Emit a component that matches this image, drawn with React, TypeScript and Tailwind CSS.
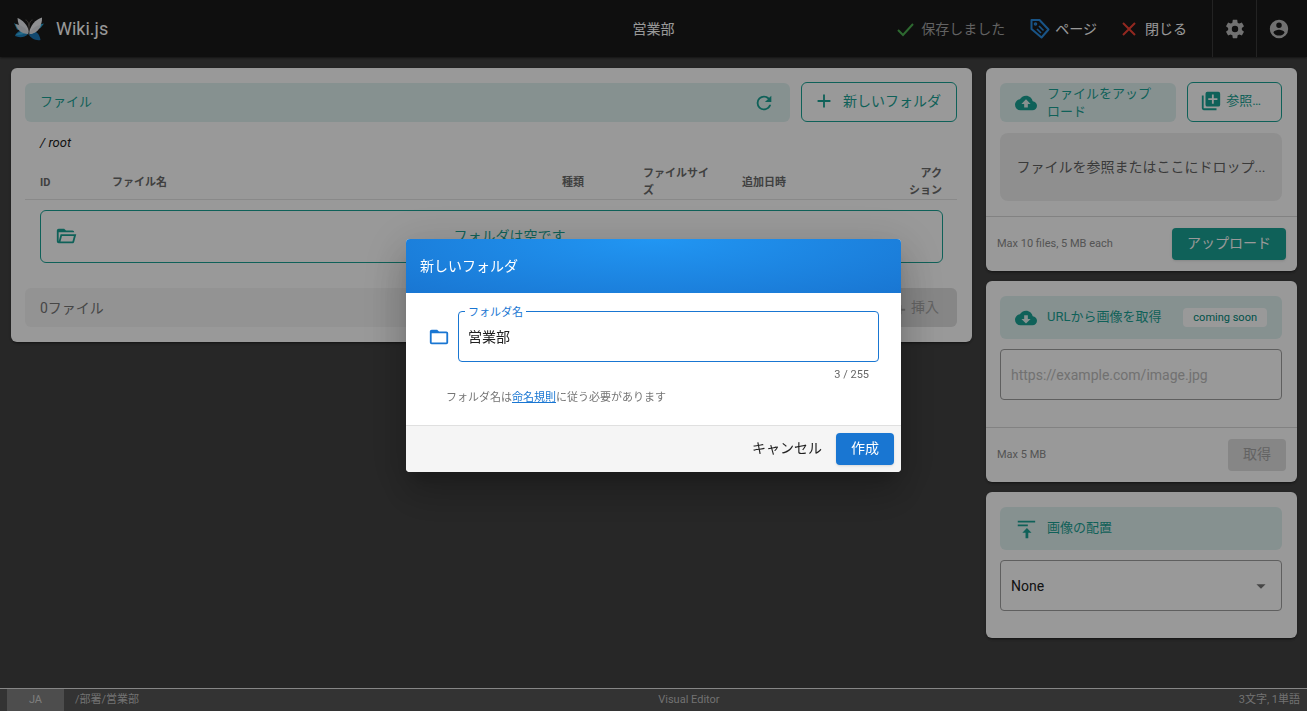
import React, { useState } from "react";

const paths = {
  refresh:
    "M17.65,6.35C16.2,4.9 14.21,4 12,4A8,8 0 0,0 4,12A8,8 0 0,0 12,20C15.73,20 18.84,17.45 19.73,14H17.65C16.83,16.33 14.61,18 12,18A6,6 0 0,1 6,12A6,6 0 0,1 12,6C13.66,6 15.14,6.69 16.22,7.78L13,11H20V4L17.65,6.35Z",
  plus: "M19,13H13V19H11V13H5V11H11V5H13V11H19V13Z",
  cloudUpload:
    "M14,13V17H10V13H7L12,8L17,13M19.35,10.03C18.67,6.59 15.64,4 12,4C9.11,4 6.6,5.64 5.35,8.03C2.34,8.36 0,10.9 0,14A6,6 0 0,0 6,20H19A5,5 0 0,0 24,15C24,12.36 21.95,10.22 19.35,10.03Z",
  cloudDownload:
    "M17,13L12,18L7,13H10V9H14V13M19.35,10.03C18.67,6.59 15.64,4 12,4C9.11,4 6.6,5.64 5.35,8.03C2.34,8.36 0,10.9 0,14A6,6 0 0,0 6,20H19A5,5 0 0,0 24,15C24,12.36 21.95,10.22 19.35,10.03Z",
  plusBox:
    "M19,11H15V15H13V11H9V9H13V5H15V9H19M20,2H8A2,2 0 0,0 6,4V16A2,2 0 0,0 8,18H20A2,2 0 0,0 22,16V4A2,2 0 0,0 20,2M4,6H2V20A2,2 0 0,0 4,22H18V20H4V6Z",
  folderOpen:
    "M6.1,10L4,18V8H21A2,2 0 0,0 19,6H12L10,4H4A2,2 0 0,0 2,6V18A2,2 0 0,0 4,20H19C19.9,20 20.7,19.4 20.9,18.5L23.2,10H6.1M19,18H6L7.6,12H20.6L19,18Z",
  folder:
    "M20,18H4V8H20M20,6H12L10,4H4C2.89,4 2,4.89 2,6V18A2,2 0 0,0 4,20H20A2,2 0 0,0 22,18V8C22,6.89 21.1,6 20,6Z",
  cog: "M12,15.5A3.5,3.5 0 0,1 8.5,12A3.5,3.5 0 0,1 12,8.5A3.5,3.5 0 0,1 15.5,12A3.5,3.5 0 0,1 12,15.5M19.43,12.97C19.47,12.65 19.5,12.33 19.5,12C19.5,11.67 19.47,11.34 19.43,11L21.54,9.37C21.73,9.22 21.78,8.95 21.66,8.73L19.66,5.27C19.54,5.05 19.27,4.96 19.05,5.05L16.56,6.05C16.04,5.66 15.5,5.32 14.87,5.07L14.5,2.42C14.46,2.18 14.25,2 14,2H10C9.75,2 9.54,2.18 9.5,2.42L9.13,5.07C8.5,5.32 7.96,5.66 7.44,6.05L4.95,5.05C4.73,4.96 4.46,5.05 4.34,5.27L2.34,8.73C2.21,8.95 2.27,9.22 2.46,9.37L4.57,11C4.53,11.34 4.5,11.67 4.5,12C4.5,12.33 4.53,12.65 4.57,12.97L2.46,14.63C2.27,14.78 2.21,15.05 2.34,15.27L4.34,18.73C4.46,18.95 4.73,19.03 4.95,18.95L7.44,17.94C7.96,18.34 8.5,18.68 9.13,18.93L9.5,21.58C9.54,21.82 9.75,22 10,22H14C14.25,22 14.46,21.82 14.5,21.58L14.87,18.93C15.5,18.67 16.04,18.34 16.56,17.94L19.05,18.95C19.27,19.03 19.54,18.95 19.66,18.73L21.66,15.27C21.78,15.05 21.73,14.78 21.54,14.63L19.43,12.97Z",
  account:
    "M12,19.2C9.5,19.2 7.29,17.92 6,16C6.03,14 10,12.9 12,12.9C14,12.9 17.97,14 18,16C16.71,17.92 14.5,19.2 12,19.2M12,5A3,3 0 0,1 15,8A3,3 0 0,1 12,11A3,3 0 0,1 9,8A3,3 0 0,1 12,5M12,2A10,10 0 0,0 2,12A10,10 0 0,0 12,22A10,10 0 0,0 22,12C22,6.47 17.5,2 12,2Z",
  alignTop: "M3,3H22V5H3V3M3,7H14V9H3V7M13,11L18,16H14.5V22H11.5V16H8L13,11Z",
  playlistPlus: "M2,16H10V14H2M18,14V10H16V14H12V16H16V20H18V16H22V14M14,6H2V8H14M14,10H2V12H14V10Z",
  menuDown: "M7,10L12,15L17,10H7Z",
};

function Icon({ name, className = "size-[22px]" }: { name: keyof typeof paths; className?: string }) {
  return (
    <svg viewBox="0 0 24 24" fill="currentColor" aria-hidden="true" className={`shrink-0 ${className}`}>
      <path d={paths[name]} />
    </svg>
  );
}

function Logo() {
  return (
    <svg viewBox="0 0 60 48" className="h-6 w-[30px] shrink-0" aria-hidden="true">
      <path d="M26 30 L6 25 L0 12 L10 18 Z" fill="#2ba6d8" />
      <path d="M34 30 L53 22 L60 13 L50 15 Z" fill="#2ba6d8" />
      <path d="M28 28 C16 25 5 28 2 38 C10 42 22 41 28 34 Z" fill="#1f86c4" />
      <path d="M30 28 C42 25 51 32 53 46 C43 48 33 42 29 34 Z" fill="#1c78ba" />
      <path d="M3 36 C10 31 18 29 26 31 L16 35 Z" fill="#3bb4e6" />
      <path d="M28 33 C18 31 8 20 7 2 C17 6 27 15 30 29 Z" fill="#e6e9ee" />
      <path d="M30 33 C32 17 43 5 56 1 C57 16 47 30 34 34 Z" fill="#f1f2f5" />
      <path d="M28 34 C16 34 7 27 3 14 C14 16 24 22 29 31 Z" fill="#d6dbe1" />
      <path d="M31 34 C42 34 50 27 54 16 C44 17 36 23 31 31 Z" fill="#dfe2e7" />
      <path d="M30 36 V19 M30 19 C29 10 26 6 23 6 M30 19 C31 10 34 6 37 6" fill="none" stroke="#6b6560" strokeWidth="1.8" />
    </svg>
  );
}

function Card({ children, className = "" }: { children: React.ReactNode; className?: string }) {
  return (
    <section className={`rounded-md bg-white shadow-[0_3px_1px_-2px_rgba(0,0,0,.2),0_2px_2px_rgba(0,0,0,.14),0_1px_5px_rgba(0,0,0,.12)] ${className}`}>
      {children}
    </section>
  );
}

const outlineButton =
  "flex h-10 shrink-0 items-center rounded-md border border-[#1aa294] pb-0.5 text-[#1aa294]";

export default function App() {
  const [name, setName] = useState("営業部");
  const [url, setUrl] = useState("");
  return (
    <div
      lang="ja"
      className="flex min-h-screen flex-col bg-[#424242] font-[Roboto,'Noto_Sans_CJK_JP',sans-serif] text-sm text-[#212121]"
    >
      <header className="grid h-[57px] grid-cols-[1fr_auto_1fr] items-center bg-[#191919] text-white shadow-[0_1px_2px_rgba(0,0,0,.5)]">
        <div className="flex items-center gap-3 pl-3.5">
          <Logo />
          <span className="text-lg">Wiki.js</span>
        </div>
        <span className="text-sm">営業部</span>
        <div className="flex h-full items-center justify-end">
          <button disabled className="mr-6 flex items-center gap-1.5 text-sm text-[#a3a3a3]">
            <svg viewBox="0 0 20 20" className="size-5" fill="none" stroke="#4caf50" strokeWidth="2" aria-hidden="true">
              <path d="M3 11 L8 16 L18 5" />
            </svg>
            保存しました
          </button>
          <button className="mr-6 flex items-center gap-1 text-sm">
            <svg viewBox="0 0 22 22" className="size-[22px]" fill="none" stroke="#2b8ce0" strokeWidth="2" aria-hidden="true">
              <path d="M2.5 2 H10.5 L19.5 11.5 L12.5 19.5 L2.5 11 Z" strokeLinejoin="round" />
              <path d="M8 11 L12 15 M10 8 L14.5 12.5" strokeWidth="1.7" />
              <circle cx="6.5" cy="6" r=".8" />
            </svg>
            ページ
          </button>
          <button className="mr-[25px] flex items-center gap-2 text-sm">
            <svg viewBox="0 0 16 16" className="size-4" fill="none" stroke="#f44336" strokeWidth="2" aria-hidden="true">
              <path d="M2 2 L14 14 M14 2 L2 14" />
            </svg>
            閉じる
          </button>
          <button aria-label="設定" className="flex h-full w-11 items-center justify-center border-l border-white/15 text-[#bdbdbd]">
            <Icon name="cog" />
          </button>
          <button aria-label="アカウント" className="flex h-full w-[51px] items-center border-l border-white/15 pl-[11px] text-[#bdbdbd]">
            <Icon name="account" />
          </button>
        </div>
      </header>

      <main className="flex flex-1 items-start gap-3.5 py-[11px] pr-2.5 pl-[11px]">
        <Card className="min-w-0 flex-1 py-[15px] pr-[15px] pl-3.5">
          <div className="flex gap-[11px]">
            <div className="flex h-[39px] flex-1 items-center justify-between rounded-md bg-[#e0f2f1] px-[15px] text-[13px] text-[#1aa294]">
              <h2>ファイル</h2>
              <button aria-label="更新"><Icon name="refresh" /></button>
            </div>
            <button className={`${outlineButton} -my-px gap-1 px-[11px] text-sm`}>
              <Icon name="plus" />
              <span className="px-1">新しいフォルダ</span>
            </button>
          </div>
          <nav className="flex h-[43px] items-center px-[15px] text-[13px] italic">/ root</nav>
          <table className="w-full table-fixed border-collapse text-left text-[11px] leading-[17px] [line-break:strict] text-[#6b6b6b]">
            <thead>
              <tr className="border-b border-black/10 [&>th]:px-[15px] [&>th]:font-bold">
                <th className="w-[72px]">ID</th>
                <th>ファイル名</th>
                <th className="w-[81px]">種類</th>
                <th className="w-[99px]">ファイルサイズ</th>
                <th className="w-[158px]">追加日時</th>
                <th className="w-[72px] text-right">アクション</th>
              </tr>
            </thead>
          </table>
          <div className="mr-3.5 ml-[15px] mt-2.5 flex h-[53px] items-center rounded-md border border-[#1aa294] px-3.5 pb-0.5 text-[#1aa294]">
            <Icon name="folderOpen" />
            <p className="flex-1 pl-3.5 text-center text-sm">フォルダは空です</p>
          </div>
          <div className="mt-[25px] flex h-[39px] items-center justify-between rounded-md bg-[#f5f5f5] pl-[15px] text-[#757575]">
            <span>0ファイル</span>
            <button disabled className="flex h-full items-center gap-1 rounded-md bg-[#e0e0e0] pr-[18px] pb-0.5 pl-3 text-sm text-[#a6a6a6]">
              <Icon name="playlistPlus" />
              挿入
            </button>
          </div>
        </Card>

        <aside className="flex w-[311px] shrink-0 flex-col gap-2.5">
          <Card>
            <div className="py-[15px] pr-[15px] pl-3.5">
              <div className="flex gap-[11px]">
                <div className="flex h-[39px] flex-1 items-center gap-2.5 rounded-md bg-[#e0f2f1] px-[15px] text-[13px] leading-[18px] text-[#1aa294]">
                  <Icon name="cloudUpload" />
                  <h2 className="pr-2">ファイルをアップロード</h2>
                </div>
                <button className={`${outlineButton} -my-px gap-1 px-3 text-[13px]`}>
                  <Icon name="plusBox" />
                  <span className="pr-2">参照…</span>
                </button>
              </div>
              <div className="mt-[11px] flex h-[68px] items-center justify-center overflow-hidden rounded-lg bg-[#efefef] whitespace-nowrap text-[#616161]">
                ファイルを参照またはここにドロップ...
              </div>
            </div>
            <div className="flex h-[55px] items-center justify-between border-t border-black/15 px-[11px] text-[11px] text-[#8c8c8c]">
              Max 10 files, 5 MB each
              <button className="h-8 rounded bg-[#1aa294] px-[15px] pb-0.5 text-sm text-white shadow">アップロード</button>
            </div>
          </Card>

          <Card>
            <div className="pt-[15px] pr-[15px] pb-[27px] pl-3.5">
              <div className="flex h-[43px] items-center gap-2.5 rounded-md bg-[#e0f2f1] px-[15px] text-[13px] text-[#1aa294]">
                <Icon name="cloudDownload" />
                <h2 className="flex-1">URLから画像を取得</h2>
                <span className="rounded bg-white px-2.5 py-0.5 text-[11px] text-[#00897b]">coming soon</span>
              </div>
              <input
                aria-label="画像のURL"
                placeholder="https://example.com/image.jpg"
                value={url}
                onChange={(e) => setUrl(e.target.value)}
                className="mt-2.5 h-[51px] w-full rounded border border-[#9e9e9e] px-2.5 placeholder:text-[#bdbdbd]"
              />
            </div>
            <div className="flex h-[55px] items-center justify-between border-t border-black/15 px-[11px] text-[11px] text-[#8c8c8c]">
              Max 5 MB
              <button disabled className="h-8 rounded bg-[#e0e0e0] px-[15px] pb-0.5 text-sm text-[#a6a6a6]">取得</button>
            </div>
          </Card>

          <Card className="pt-[15px] pr-[15px] pb-[27px] pl-3.5">
            <div className="flex h-[43px] items-center gap-2.5 rounded-md bg-[#e0f2f1] px-[15px] text-[13px] text-[#1aa294]">
              <Icon name="alignTop" />
              <h2>画像の配置</h2>
            </div>
            <div className="relative mt-2.5">
              <select aria-label="画像の配置" className="h-[51px] w-full appearance-none rounded border border-[#9e9e9e] px-2.5">
                <option>None</option>
              </select>
              <Icon name="menuDown" className="pointer-events-none absolute top-[15px] right-2.5 size-[22px] text-[#757575]" />
            </div>
          </Card>
        </aside>
      </main>

      <footer className="flex h-[23px] items-center justify-between border-t border-[#e0e0e0] bg-[#555] px-[7px] text-[11px] text-[#bdbdbd]">
        <div className="flex h-full items-center gap-[11px]">
          <span className="flex h-full w-[57px] items-center justify-center bg-[#808080] text-[#d0d0d0]">JA</span>
          /部署/営業部
        </div>
        <span>Visual Editor</span>
        <span>3文字, 1単語</span>
      </footer>

      <div className="fixed inset-0 flex items-center justify-center bg-black/40">
        <form
          role="dialog"
          aria-labelledby="dialog-title"
          onSubmit={(e) => e.preventDefault()}
          className="w-[495px] overflow-hidden rounded bg-white shadow-[0_11px_15px_-7px_rgba(0,0,0,.2),0_24px_38px_3px_rgba(0,0,0,.14),0_9px_46px_8px_rgba(0,0,0,.12)]"
        >
          <h1
            id="dialog-title"
            className="flex h-[54px] items-center bg-[radial-gradient(ellipse_at_top,#2196f3,#1976d2)] px-3.5 text-sm text-white"
          >
            新しいフォルダ
          </h1>
          <div className="px-[22px] pt-[18px] pb-[18px]">
            <div className="flex items-center gap-2">
              <Icon name="folder" className="size-[22px] text-[#1976d2]" />
              <div className="relative flex-1">
                <label htmlFor="folder-name" className="absolute -top-1.5 left-[7px] bg-white px-[3px] text-[11px] leading-4 text-[#1976d2]">
                  フォルダ名
                </label>
                <input
                  id="folder-name"
                  value={name}
                  maxLength={255}
                  onChange={(e) => setName(e.target.value)}
                  className="block h-[51px] w-full rounded border border-[#1976d2] px-[9px] pb-0.5 text-sm outline-none"
                />
              </div>
            </div>
            <div className="pt-1 pr-2.5 text-right text-[11px] leading-[18px] text-[#666]">{name.length} / 255</div>
            <p className="pt-[5px] pl-[18px] text-[11px] leading-[18px] text-[#757575]">
              フォルダ名は
              <a href="#naming" className="text-[#1976d2] underline">命名規則</a>
              に従う必要があります
            </p>
          </div>
          <div className="flex h-[47px] items-center justify-end gap-3.5 border-t border-[#e0e0e0] bg-[#f5f5f5] px-[7px] text-sm">
            <button type="button" className="h-8 pb-0.5">キャンセル</button>
            <button className="h-8 rounded bg-[#1976d2] px-[15px] pb-0.5 text-white shadow">作成</button>
          </div>
        </form>
      </div>
    </div>
  );
}
